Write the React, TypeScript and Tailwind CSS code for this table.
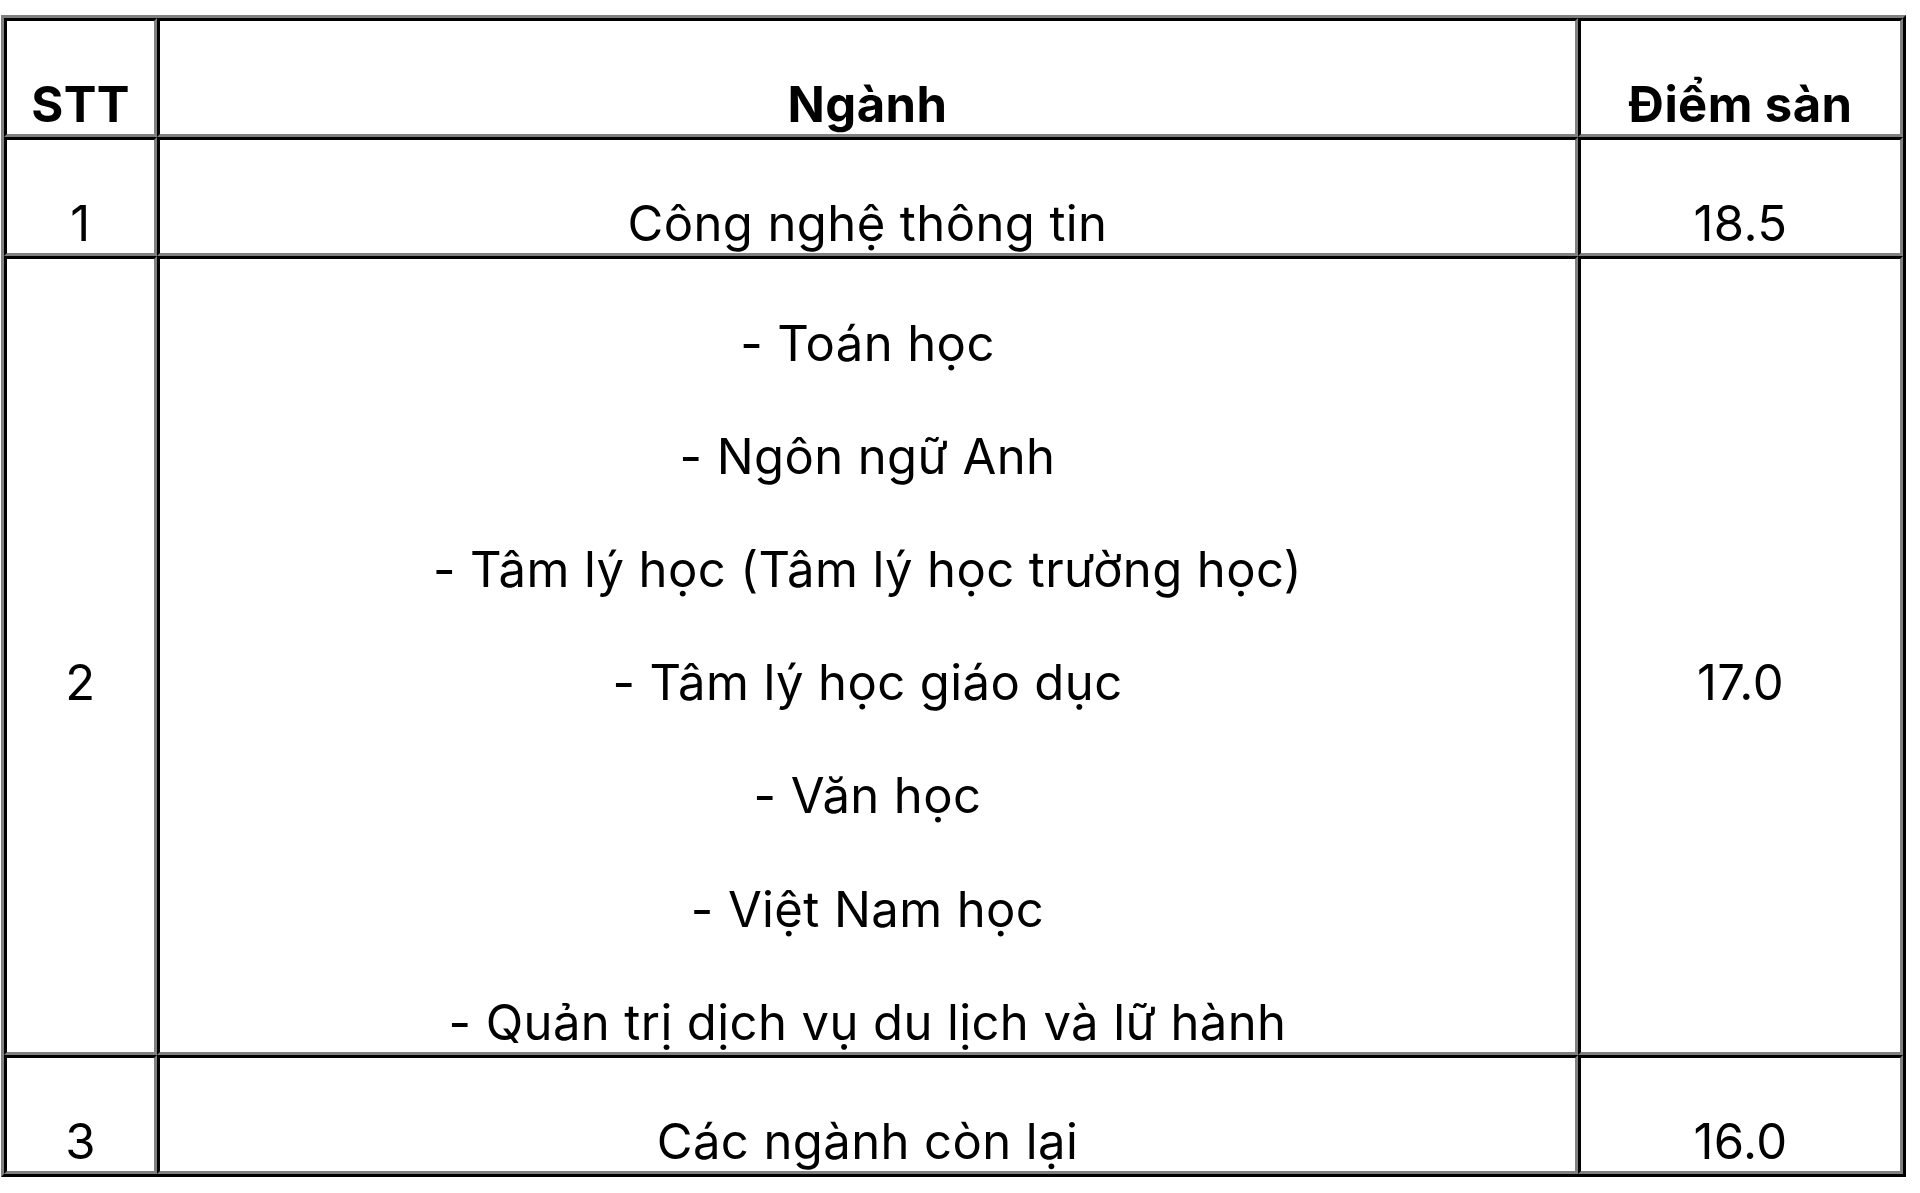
import React from "react";

const cell =
  "border-t-[3px] border-l-[3px] border-r-[3px] border-b-[3px] border-t-black border-l-black border-r-[#808080] border-b-[#808080] text-center align-middle p-0";

function Line({ children, bold }: { children: React.ReactNode; bold?: boolean }) {
  return (
    <div
      className={`pt-[55.2px] leading-[58px] text-[49px] tracking-[0.4px] ${bold ? "font-bold" : "font-normal"}`}
    >
      {children}
    </div>
  );
}

const rows: { stt: string; nganh: string[]; diem: string }[] = [
  { stt: "1", nganh: ["Công nghệ thông tin"], diem: "18.5" },
  {
    stt: "2",
    nganh: [
      "- Toán học",
      "- Ngôn ngữ Anh",
      "- Tâm lý học (Tâm lý học trường học)",
      "- Tâm lý học giáo dục",
      "- Văn học",
      "- Việt Nam học",
      "- Quản trị dịch vụ du lịch và lữ hành",
    ],
    diem: "17.0",
  },
  { stt: "3", nganh: ["Các ngành còn lại"], diem: "16.0" },
];

export default function App() {
  return (
    <div
      className="min-h-[1193px] w-[1920px] bg-white pt-[15px] pl-[1px] text-black"
      style={{ fontFamily: "Inter, 'Noto Sans', sans-serif" }}
    >
      <table className="border-separate border-spacing-0 w-[1905px] table-fixed border-t-[3px] border-l-[3px] border-r-[3px] border-b-[3px] border-t-[#808080] border-l-[#808080] border-r-black border-b-black">
        <colgroup>
          <col className="w-[153px]" />
          <col className="w-[1421px]" />
          <col className="w-[325px]" />
        </colgroup>
        <thead>
          <tr>
            <th className={cell}>
              <Line bold>STT</Line>
            </th>
            <th className={cell}>
              <Line bold>Ngành</Line>
            </th>
            <th className={cell}>
              <Line bold>Điểm sàn</Line>
            </th>
          </tr>
        </thead>
        <tbody>
          {rows.map((r) => (
            <tr key={r.stt}>
              <td className={cell}>
                <Line>{r.stt}</Line>
              </td>
              <td className={cell}>
                {r.nganh.map((n) => (
                  <Line key={n}>{n}</Line>
                ))}
              </td>
              <td className={cell}>
                <Line>{r.diem}</Line>
              </td>
            </tr>
          ))}
        </tbody>
      </table>
    </div>
  );
}
